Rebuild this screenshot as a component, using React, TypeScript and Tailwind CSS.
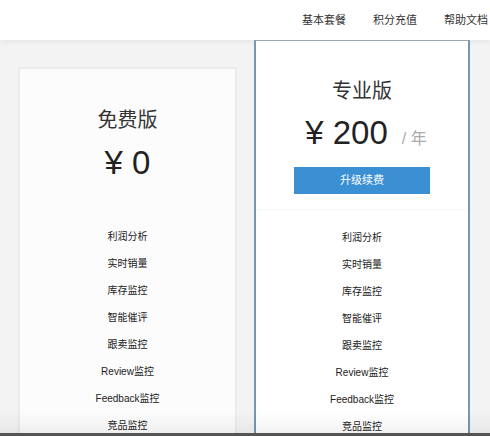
import React from "react";

const features = ["利润分析", "实时销量", "库存监控", "智能催评", "跟卖监控", "Review监控", "Feedback监控", "竞品监控"];

function FeatureList() {
  return (
    <div className="flex flex-col">
      {features.map((f) => (
        <div key={f} className="h-[27px] flex items-center justify-center text-[10px] text-[#222]">
          {f}
        </div>
      ))}
    </div>
  );
}

export default function App() {
  return (
    <div className="relative w-[490px] h-[436px] overflow-hidden bg-[#f3f3f3] font-['Liberation_Sans','Noto_Sans_CJK_SC',sans-serif] border-b-[3px] border-[#555]">
      <div className="relative z-10 h-[40px] bg-white shadow-[0_2px_6px_rgba(0,0,0,0.06)] flex items-center justify-end gap-[27px] pr-[2px] text-[11px] text-[#333]">
        <span>基本套餐</span>
        <span>积分充值</span>
        <span>帮助文档</span>
      </div>
      <div className="flex items-start pl-[18px] gap-[17px]">
        <div className="mt-[27px] w-[219px] h-[400px] bg-[#fcfcfc] border-2 border-[#ebebeb] flex flex-col items-center">
          <div className="mt-[37px] h-[28px] leading-[28px] text-[20px] text-[#333]">免费版</div>
          <div className="mt-[9px] h-[40px] leading-[40px] text-[33px] text-[#222]">¥ 0</div>
          <div className="mt-[40px] w-full">
            <FeatureList />
          </div>
        </div>
        <div className="relative z-20 w-[216px] h-[400px] bg-white border-x-2 border-t border-x-[#7896b0] border-t-[#9aa6b0] flex flex-col items-center">
          <div className="mt-[36px] h-[28px] leading-[28px] text-[20px] text-[#333]">专业版</div>
          <div className="mt-[8px] pl-[8px] h-[40px] flex items-baseline">
            <span className="leading-[40px] text-[33px] text-[#222]">¥ 200</span>
            <span className="ml-[14px] text-[16px] text-[#aaa]">/ 年</span>
          </div>
          <div className="mt-[14px] w-[136px] h-[28px] bg-[#3b8fd3] text-white text-[11px] flex items-center justify-center">
            升级续费
          </div>
          <div className="mt-[15px] w-full border-t border-[#f7f7f7] pt-[14px]">
            <FeatureList />
          </div>
        </div>
      </div>
      <div className="absolute left-0 right-0 bottom-0 h-[22px] bg-gradient-to-b from-transparent to-[rgba(0,0,0,0.05)] z-30" />
    </div>
  );
}
